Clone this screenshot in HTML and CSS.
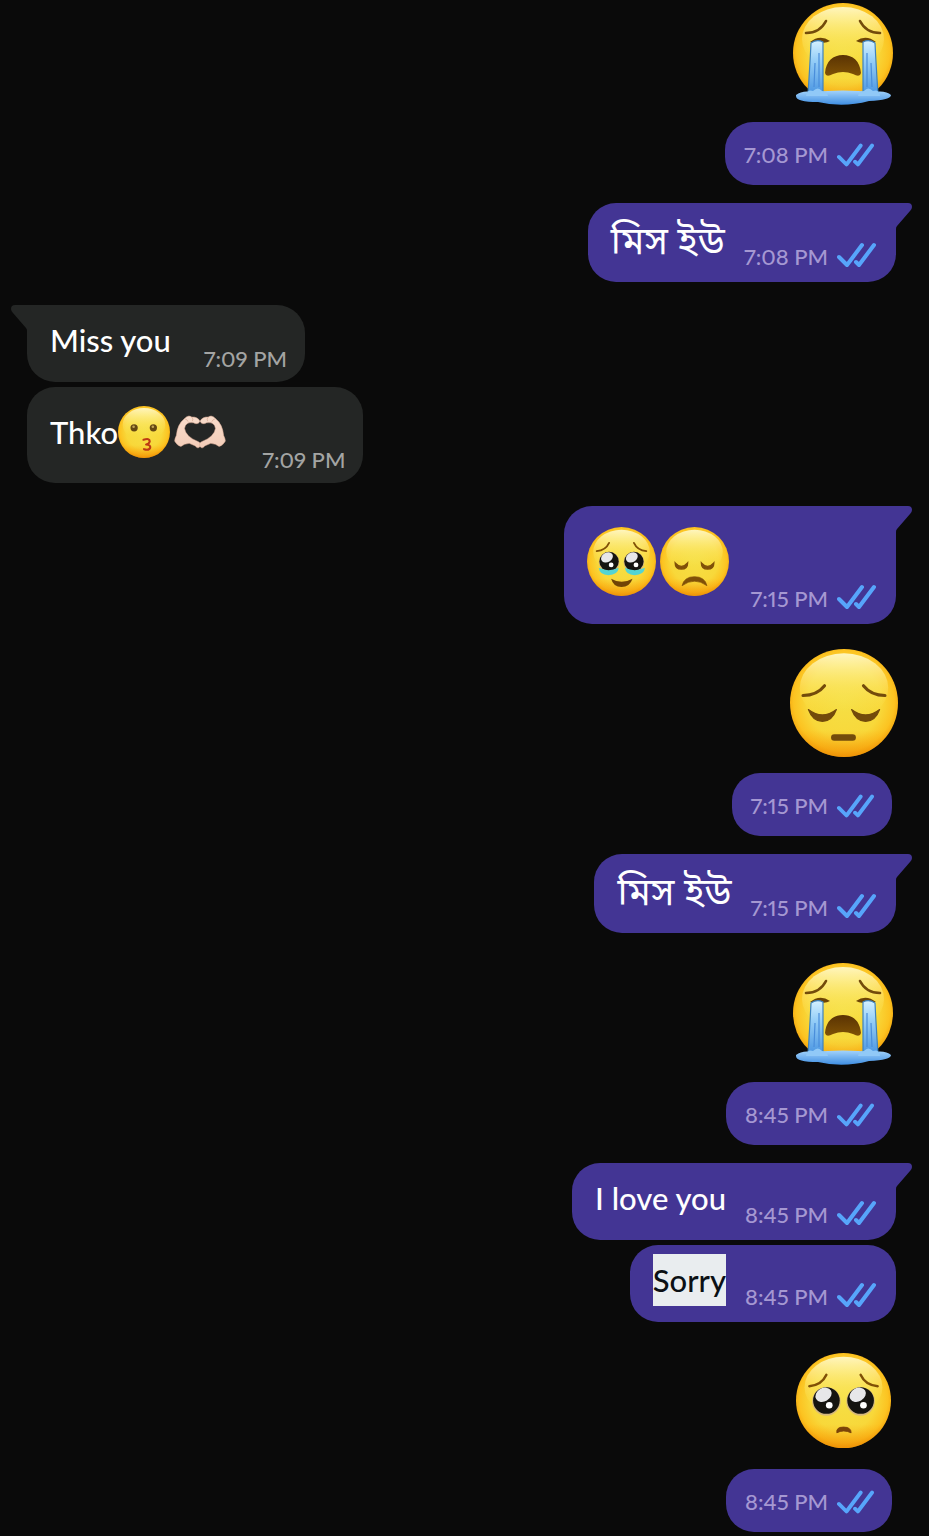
FILE: index.html
```html
<!DOCTYPE html>
<html lang="en">
<head>
<meta charset="utf-8">
<meta name="viewport" content="width=device-width, initial-scale=1">
<title>Chat</title>
<link rel="stylesheet" href="styles.css">
</head>
<body>
<svg class="defs" aria-hidden="true">
  <defs>
    <radialGradient id="face" cx="50%" cy="48%" r="53%">
      <stop offset="0" stop-color="#f5df45"/><stop offset=".65" stop-color="#f8d83a"/><stop offset=".88" stop-color="#fcc321"/><stop offset="1" stop-color="#f4a50d"/>
    </radialGradient>
    <linearGradient id="shade" x1="0" y1="0" x2="0" y2="1">
      <stop offset=".75" stop-color="#f99500" stop-opacity="0"/><stop offset="1" stop-color="#e98200" stop-opacity=".6"/>
    </linearGradient>
    <linearGradient id="shine" x1="0" y1="0" x2="0" y2="1">
      <stop offset="0" stop-color="#fffbd0" stop-opacity=".9"/><stop offset=".5" stop-color="#ffef80" stop-opacity=".35"/><stop offset=".85" stop-color="#ffe95c" stop-opacity="0"/>
    </linearGradient>
    <linearGradient id="tear" x1="0" y1="0" x2="0" y2="1">
      <stop offset="0" stop-color="#d4f1ff"/><stop offset=".35" stop-color="#98d0f8"/><stop offset="1" stop-color="#4b96e2"/>
    </linearGradient>
    <linearGradient id="mouth" x1="0" y1="0" x2="0" y2="1">
      <stop offset="0" stop-color="#5a3303"/><stop offset="1" stop-color="#805205"/>
    </linearGradient>
    <linearGradient id="skin" x1="0" y1="0" x2="0" y2="1">
      <stop offset="0" stop-color="#f8dccb"/><stop offset="1" stop-color="#f3cdb9"/>
    </linearGradient>
    <linearGradient id="puddle" x1="0" y1="0" x2="0" y2="1">
      <stop offset="0" stop-color="#a3d3fb"/><stop offset="1" stop-color="#3f8ee2"/>
    </linearGradient>
    <symbol id="base" viewBox="0 0 100 100">
      <circle cx="50" cy="50" r="50" fill="url(#face)"/>
      <circle cx="50" cy="50" r="50" fill="url(#shade)"/>
      <ellipse cx="50" cy="36" rx="41" ry="32" fill="url(#shine)"/>
    </symbol>
    <symbol id="crying" viewBox="0 0 100 102">
      <use href="#base" width="100" height="100"/>
      <path d="M13 30Q27 30 33 18M87 30Q73 30 67 18" fill="none" stroke="#734b0b" stroke-width="2.6" stroke-linecap="round"/>
      <path d="M17 39Q27 31 37 38Q32 41 27 39ZM83 39Q73 31 63 38Q68 41 73 39Z" fill="#6d4405"/>
      <path d="M32 70C33 58 40 52 50 52S67 58 68 70Q67 75 60 71Q50 67 40 71Q33 75 32 70Z" fill="url(#mouth)"/>
      <path d="M3 92Q9 87 20 89Q50 86 80 89Q93 87 98 92Q98 97 76 98Q50 105 25 99Q3 99 3 93Z" fill="url(#puddle)"/>
      <path d="M18 40Q24 36 30 39V91H15Q17 61 18 40ZM82 40Q76 36 70 39V91H85Q83 61 82 40Z" fill="url(#tear)" stroke="#3e83bd" stroke-width="1.2"/>
      <path d="M22 60L21 84M26 50V84M78 60L79 84M74 50V84" stroke="#4a8edb" stroke-width="1.2"/>
      <path d="M13 93Q14 86 20 88Q25 83 29 88Q34 88 35 93ZM87 93Q86 86 80 88Q75 83 71 88Q66 88 65 93Z" fill="#91c9f7"/>
    </symbol>
    <symbol id="pensive" viewBox="0 0 100 100">
      <use href="#base" width="100" height="100"/>
      <path d="M12 43Q25 43 32 34M88 43Q75 43 68 34" fill="none" stroke="#734b0b" stroke-width="2.8" stroke-linecap="round"/>
      <path d="M17 56Q30 66 43 56Q39 67 30 67T17 56ZM57 56Q70 66 83 56Q79 67 70 67T57 56Z" fill="#734b0b" stroke="#734b0b" stroke-linejoin="round"/>
      <rect x="38" y="79" width="23" height="6" rx="3" fill="#734b0b"/>
    </symbol>
    <symbol id="eyes" viewBox="0 0 100 100">
      <circle cx="32" cy="51" r="15" fill="#d5b87c"/><circle cx="68" cy="51" r="15" fill="#d5b87c"/>
      <circle cx="32" cy="50" r="14" fill="#151410"/><circle cx="68" cy="50" r="14" fill="#151410"/>
      <ellipse cx="29" cy="44" rx="9" ry="7" transform="rotate(-30 29 44)" fill="#e7e7e9"/><ellipse cx="65" cy="44" rx="9" ry="7" transform="rotate(-30 65 44)" fill="#e7e7e9"/>
      <circle cx="35" cy="55" r="3.5" fill="#fff"/><circle cx="71" cy="55" r="3.5" fill="#fff"/>
      <path d="M14 35Q27 34 32 23M86 35Q73 34 68 23" fill="none" stroke="#805006" stroke-width="2.6" stroke-linecap="round"/>
    </symbol>
    <symbol id="pleading" viewBox="0 0 100 100">
      <use href="#base" width="100" height="100"/><use href="#eyes" width="100" height="100"/>
      <path d="M43 84Q42 78 50 78T58 84Q50 80 43 84Z" fill="#7b4308" stroke="#7b4308"/>
    </symbol>
    <symbol id="tearful" viewBox="0 0 100 100">
      <use href="#base" width="100" height="100"/><use href="#eyes" width="100" height="100"/>
      <path d="M17 59Q31 66 46 59Q45 69 31 70Q18 69 17 59ZM55 59Q69 66 84 59Q83 69 69 70Q56 69 55 59Z" fill="#53d4d4"/>
      <path d="M35 75Q50 84 66 75Q62 87 50 87T35 75Z" fill="#704406"/>
    </symbol>
    <symbol id="sad" viewBox="0 0 100 100">
      <use href="#base" width="100" height="100"/>
      <path d="M22 52Q31 62 40 52Q40 61 31 61T22 52ZM60 52Q69 62 78 52Q78 61 69 61T60 52Z" fill="#805008" stroke="#805008" stroke-width="2"/>
      <path d="M32 85Q35 72 50 72T68 85Q50 72 32 85Z" fill="#805008" stroke="#805008"/>
    </symbol>
    <symbol id="kiss" viewBox="0 0 100 100">
      <use href="#base" width="100" height="100"/>
      <circle cx="31" cy="42" r="7" fill="#654813"/><circle cx="68" cy="42" r="7" fill="#654813"/>
      <circle cx="30" cy="40" r="2.5" fill="#c2a553"/><circle cx="67" cy="40" r="2.5" fill="#c2a553"/>
      <path d="M49 65Q61 61 61 68Q60 73 54 74Q63 75 62 80Q60 86 50 83" fill="none" stroke="#bd3a13" stroke-width="4" stroke-linecap="round" stroke-linejoin="round"/>
    </symbol>
    <symbol id="hands" viewBox="0 0 100 66">
      <path d="M1 51Q0 48 4 40Q6 18 20 7Q27-1 34 4Q45 3 50 12Q46 20 37 15Q22 13 20 26Q22 42 47 52Q54 55 50 61Q46 67 41 60L29 55Q19 56 13 61Q6 60 1 51Z" fill="url(#skin)" stroke="#d9aa95"/>
      <path d="M99 51Q100 48 96 40Q94 18 80 7Q73-1 66 4Q55 3 50 12Q54 20 63 15Q78 13 80 26Q78 42 53 52Q46 55 50 61Q54 67 59 60L71 55Q81 56 87 61Q94 60 99 51Z" fill="url(#skin)" stroke="#d9aa95"/>
      <path d="M34 4Q38 8 35 12M66 4Q62 8 65 12M20 7Q26 9 27 13M80 7Q74 9 73 13" fill="none" stroke="#c9957d"/>
    </symbol>
    <symbol id="ticks" viewBox="0 0 39 26">
      <path d="M2 15L10 23L25 3M19 20L22 23L37 3" fill="none" stroke="#57a5fb" stroke-width="4" stroke-linecap="round" stroke-linejoin="round"/>
    </symbol>
    <symbol id="tail" viewBox="0 0 18 26"><path d="M0 0H12Q16 0 16 4Q16 6 14 8L1 23Q0 24 0 26Z" fill="currentColor"/></symbol>
  </defs>
</svg>
<main class="chat">
  <svg class="emoji emoji-cry" role="img" aria-label="Loudly crying face"><use href="#crying"/></svg>
  <div class="pill"><time>7:08 PM</time><svg class="ticks"><use href="#ticks"/></svg></div>
  <article class="bubble out lead bangla"><p lang="bn">মিস ইউ</p><time>7:08 PM</time><svg class="ticks"><use href="#ticks"/></svg><svg class="tail"><use href="#tail"/></svg></article>

  <article class="bubble in lead"><p>Miss you</p><time>7:09 PM</time><svg class="tail"><use href="#tail"/></svg></article>
  <article class="bubble in with-emoji"><p>Thko<svg class="small" role="img" aria-label="Kissing face"><use href="#kiss"/></svg><svg class="small hands" role="img" aria-label="Heart hands"><use href="#hands"/></svg></p><time>7:09 PM</time></article>

  <article class="bubble out lead duo"><p><svg class="medium" role="img" aria-label="Face holding back tears"><use href="#tearful"/></svg><svg class="medium" role="img" aria-label="Disappointed face"><use href="#sad"/></svg></p><time>7:15 PM</time><svg class="ticks"><use href="#ticks"/></svg><svg class="tail"><use href="#tail"/></svg></article>
  <svg class="emoji emoji-pensive" role="img" aria-label="Pensive face"><use href="#pensive"/></svg>
  <div class="pill"><time>7:15 PM</time><svg class="ticks"><use href="#ticks"/></svg></div>
  <article class="bubble out lead bangla"><p lang="bn">মিস ইউ</p><time>7:15 PM</time><svg class="ticks"><use href="#ticks"/></svg><svg class="tail"><use href="#tail"/></svg></article>

  <svg class="emoji emoji-cry" role="img" aria-label="Loudly crying face"><use href="#crying"/></svg>
  <div class="pill"><time>8:45 PM</time><svg class="ticks"><use href="#ticks"/></svg></div>
  <article class="bubble out lead"><p>I love you</p><time>8:45 PM</time><svg class="ticks"><use href="#ticks"/></svg><svg class="tail"><use href="#tail"/></svg></article>
  <article class="bubble out"><p><mark>Sorry</mark></p><time>8:45 PM</time><svg class="ticks"><use href="#ticks"/></svg></article>
  <svg class="emoji emoji-plead" role="img" aria-label="Pleading face"><use href="#pleading"/></svg>
  <div class="pill"><time>8:45 PM</time><svg class="ticks"><use href="#ticks"/></svg></div>
</main>
</body>
</html>
```
FILE: styles.css
```css
* { box-sizing: border-box; }

body {
  margin: 0;
  background: #0a0a0a;
  color: #fff;
  font-family: Lato, "Noto Sans Bengali", "Noto Sans", sans-serif;
}

.defs { position: absolute; width: 0; height: 0; }
svg { display: block; flex: none; }

.chat {
  display: flex;
  flex-direction: column;
  padding: 3px 33px 4px 27px;
}

.pill, .bubble {
  display: flex;
  width: fit-content;
  border-radius: 28px;
}

.pill {
  align-self: flex-end;
  align-items: center;
  height: 63px;
  margin: 17px 4px 0 0;
  padding: 3px 18px 0 19px;
  background: #433594;
}

.bubble {
  position: relative;
  align-items: flex-end;
  margin-top: 5px;
  padding: 9px 20px 9px 23px;
}

.out { align-self: flex-end; background: #433594; }
.in { align-self: flex-start; padding: 9px 18px 7px 23px; background: #242625; }
.out.lead { margin-top: 18px; border-top-right-radius: 0; }
.in.lead { margin-top: 23px; border-top-left-radius: 0; }
.out.duo { margin-top: 23px; }

.bubble p {
  display: flex;
  align-items: center;
  align-self: flex-start;
  margin: 0 19px 7px 0;
  font-size: 31px;
  font-weight: 500;
  line-height: 52px;
  white-space: nowrap;
}
.in p { margin: 0 33px 9px 0; }
.bubble.bangla p { font-size: 38px; font-weight: 400; line-height: 54px; }
.bubble.with-emoji p { min-height: 71px; margin-right: 36px; }
.bubble.duo p { min-height: 93px; gap: 4px; margin-right: 22px; }

time {
  color: #a598d2;
  font-size: 22px;
  font-weight: 500;
  line-height: 32px;
  font-feature-settings: "pnum";
  white-space: nowrap;
}
.in time { color: #a3a4a3; }

mark { background: #e9edef; color: #0b1014; }

.ticks { width: 39px; height: 26px; margin-left: 9px; }
.pill .ticks { width: 37px; }
.bubble .ticks { margin-bottom: 5px; }

.tail { position: absolute; top: 0; left: 100%; width: 18px; height: 26px; color: #433594; }
.in .tail { right: 100%; left: auto; color: #242625; transform: scaleX(-1); }

.emoji { align-self: flex-end; }
.emoji-cry { width: 100px; height: 102px; margin-right: 3px; }
.bubble + .emoji-cry { margin-top: 30px; }
.emoji-pensive { width: 108px; height: 108px; margin: 25px -2px 0 0; }
.emoji-pensive + .pill { margin-top: 16px; }
.emoji-plead { width: 95px; height: 95px; margin: 31px 5px 0 0; }
.emoji-plead + .pill { margin-top: 21px; }

.small { width: 52px; height: 52px; }
.hands { height: 34px; margin-left: 4px; }
.medium { width: 69px; height: 69px; }
```
